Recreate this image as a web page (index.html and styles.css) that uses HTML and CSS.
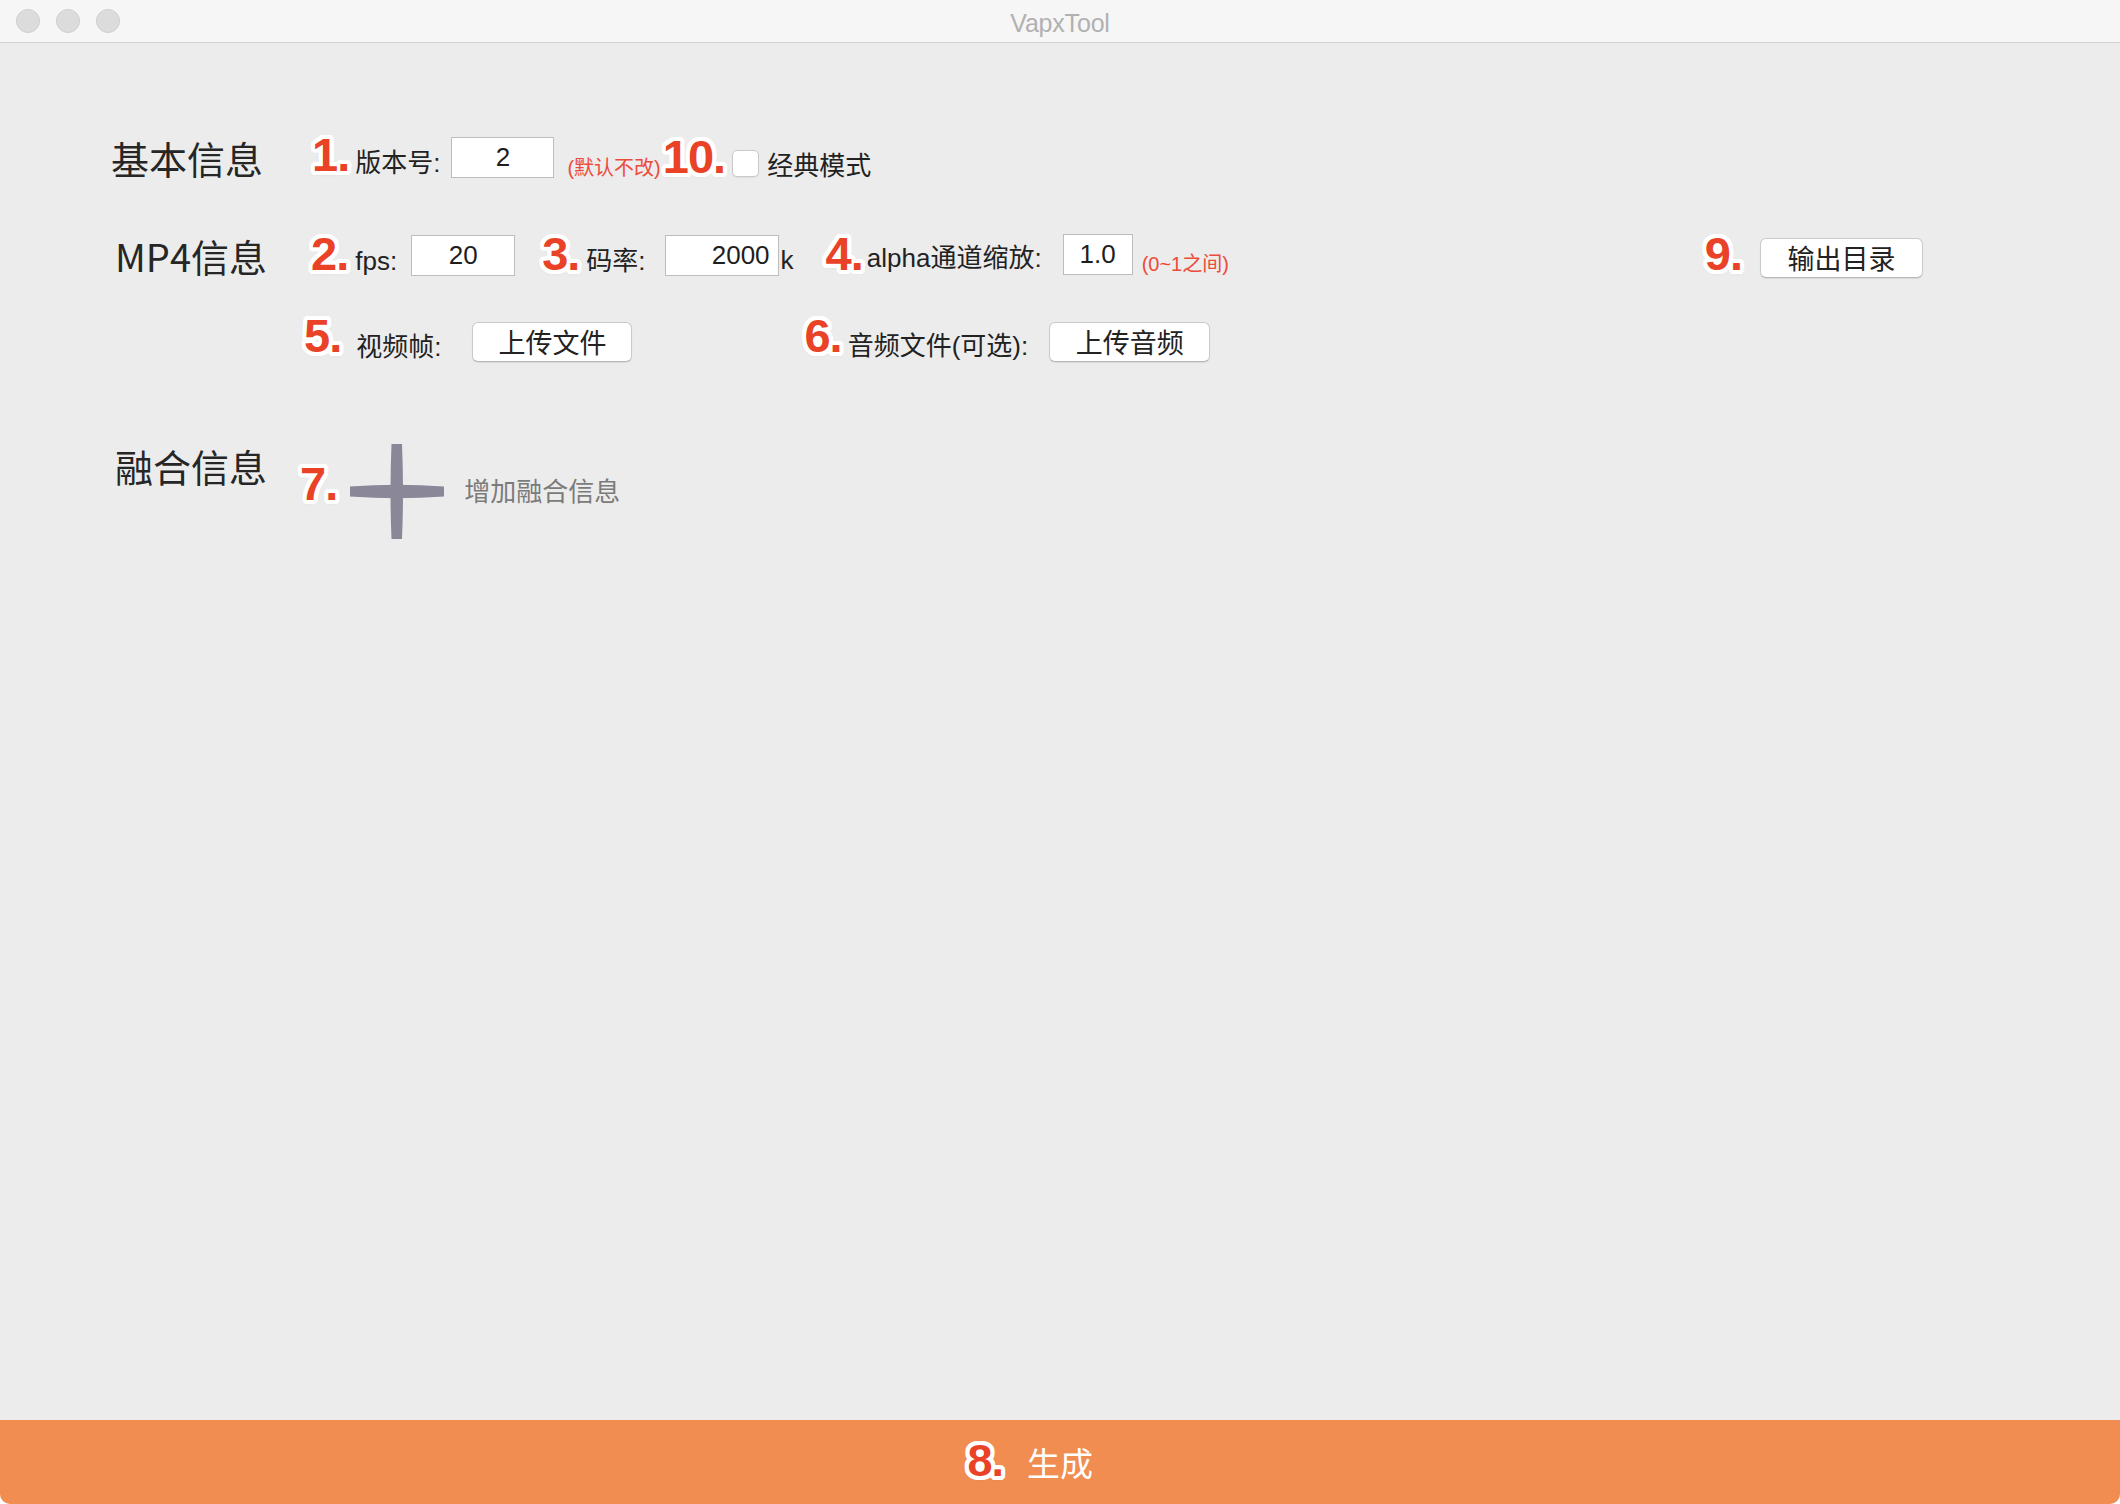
FILE: index.html
```html
<!DOCTYPE html>
<html lang="zh-CN">
<head>
<meta charset="utf-8">
<title>VapxTool</title>
<link rel="stylesheet" href="styles.css">
</head>
<body>
<div class="window">
  <header class="titlebar">
    <div class="lights">
      <span class="light"></span><span class="light"></span><span class="light"></span>
    </div>
    <div class="title">VapxTool</div>
    <div></div>
  </header>

  <main class="content">
    <section class="row row-basic">
      <h2 class="section">基本信息</h2>
      <span class="badge b1">1.</span>
      <span class="label l-version">版本号:</span>
      <div class="input in-version">2</div>
      <span class="note n-version">(默认不改)</span>
      <span class="badge b10">10.</span>
      <span class="checkbox"></span>
      <span class="label l-classic">经典模式</span>
    </section>

    <section class="row row-mp4">
      <h2 class="section">MP4信息</h2>
      <span class="badge b2">2.</span>
      <span class="label l-fps">fps:</span>
      <div class="input in-fps">20</div>
      <span class="badge b3">3.</span>
      <span class="label l-rate">码率:</span>
      <div class="input in-rate">2000</div>
      <span class="label l-k">k</span>
      <span class="badge b4">4.</span>
      <span class="label l-alpha">alpha通道缩放:</span>
      <div class="input in-alpha">1.0</div>
      <span class="note n-alpha">(0~1之间)</span>
      <span class="badge b9">9.</span>
      <button class="btn btn-out">输出目录</button>
    </section>

    <section class="row row-files">
      <span class="badge b5">5.</span>
      <span class="label l-frames">视频帧:</span>
      <button class="btn btn-frames">上传文件</button>
      <span class="badge b6">6.</span>
      <span class="label l-audio">音频文件(可选):</span>
      <button class="btn btn-audio">上传音频</button>
    </section>

    <section class="row row-merge">
      <h2 class="section section-merge">融合信息</h2>
      <span class="badge b7">7.</span>
      <svg class="plus" width="96" height="97" viewBox="0 0 96 97" aria-hidden="true">
        <path d="M1,43.5 Q48,40 95,43.5 L95,53.5 Q48,57 1,53.5 Z" fill="#8a8898"/>
        <path d="M42.5,1 Q40.5,48.5 42.5,96 L53,96 Q55,48.5 53,1 Z" fill="#8a8898"/>
      </svg>
      <span class="add-text">增加融合信息</span>
    </section>
  </main>

  <footer class="generate">
    <div class="gen-inner">
      <span class="badge b8">8.</span>
      <span class="gen-text">生成</span>
    </div>
  </footer>
</div>
</body>
</html>
```

FILE: styles.css
```css
* { box-sizing: border-box; }

html, body {
  margin: 0;
  padding: 0;
  background: #ffffff;
}

body {
  font-family: "Liberation Sans", "Noto Sans CJK SC", sans-serif;
  color: #222;
}

.window {
  width: 2120px;
  height: 1504px;
  display: flex;
  flex-direction: column;
  background: #ececec;
  border-radius: 0 0 10px 10px;
  overflow: hidden;
}

/* ---------- title bar ---------- */
.titlebar {
  height: 43px;
  flex: none;
  display: grid;
  grid-template-columns: 1fr auto 1fr;
  align-items: center;
  background: #f6f6f6;
  border-bottom: 1px solid #d3d3d3;
}

.lights {
  display: flex;
  gap: 16px;
  padding-left: 16px;
}

.light {
  width: 24px;
  height: 24px;
  border-radius: 50%;
  background: #dcdcdc;
  border: 1px solid #cfcfcf;
}

.title {
  font-family: "Liberation Sans", sans-serif;
  font-size: 25px;
  color: #b1b1b1;
  letter-spacing: -0.2px;
  padding-top: 4px;
}

/* ---------- content ---------- */
.content {
  flex: 1;
  display: flex;
  flex-direction: column;
}

.row {
  display: flex;
  align-items: center;
}

.row-basic {
  margin-top: 94px;
  height: 41px;
  padding-left: 111px;
}

.row-mp4 {
  margin-top: 57px;
  height: 41px;
  padding-left: 115px;
  padding-right: 197px;
}

.row-files {
  margin-top: 46px;
  height: 40px;
  padding-left: 304px;
}

.row-merge {
  margin-top: 81px;
  height: 97px;
  padding-left: 115px;
}

.section {
  margin: 0;
  font-family: "Noto Sans CJK SC", sans-serif;
  font-size: 38px;
  font-weight: 400;
  line-height: 50px;
  color: #262626;
  white-space: nowrap;
}

.section-merge {
  align-self: flex-start;
  margin-top: -2px;
}

.label {
  font-size: 26px;
  line-height: 34px;
  color: #222;
  white-space: nowrap;
}

.note {
  font-size: 20px;
  color: #ec4b3b;
  white-space: nowrap;
  margin-top: 18px;
}

.input {
  height: 41px;
  background: #fff;
  border: 1px solid #bdbdbd;
  font-size: 26px;
  line-height: 39px;
  text-align: center;
  color: #1e1e1e;
}

.checkbox {
  width: 27px;
  height: 27px;
  background: #fff;
  border: 1px solid #c9c9c9;
  border-radius: 5px;
  box-shadow: 0 1px 1px rgba(0,0,0,0.06);
  margin-top: 12px;
}

.btn {
  font-family: "Noto Sans CJK SC", sans-serif;
  font-size: 27px;
  color: #222;
  background: #fff;
  border: 1px solid #cacaca;
  border-bottom-color: #b7b7b7;
  border-radius: 6px;
  box-shadow: 0 1px 1px rgba(0,0,0,0.08);
  padding: 0;
  height: 40px;
  line-height: 36px;
}

/* ---------- annotation badges ---------- */
.badge {
  font-family: "Liberation Sans", sans-serif;
  font-weight: 700;
  font-size: 47px;
  line-height: 1;
  letter-spacing: -1px;
  color: #ea4226;
  white-space: nowrap;
  text-shadow:
    4px 0 0 #fff, -4px 0 0 #fff, 0 4px 0 #fff, 0 -4px 0 #fff,
    3px 3px 0 #fff, -3px 3px 0 #fff, 3px -3px 0 #fff, -3px -3px 0 #fff,
    4px 2px 0 #fff, -4px 2px 0 #fff, 4px -2px 0 #fff, -4px -2px 0 #fff,
    2px 4px 0 #fff, -2px 4px 0 #fff, 2px -4px 0 #fff, -2px -4px 0 #fff,
    0 1px 5px rgba(0,0,0,0.35);
  padding: 0 4px;
}

/* ---------- row 1 spacing ---------- */
.b1 { margin-left: 45px; margin-bottom: 6px; }
.l-version { margin-left: 2px; margin-top: 10px; }
.in-version { margin-left: 11px; width: 103px; }
.n-version { margin-left: 13px; }
.b10 { margin-left: -2px; margin-bottom: 2px; }
.checkbox { margin-left: 3px; }
.l-classic { margin-left: 8px; margin-top: 16px; }

/* ---------- row 2 spacing ---------- */
.b2 { margin-left: 40px; margin-bottom: 4px; }
.l-fps { margin-left: 3px; margin-top: 10px; }
.in-fps { margin-left: 14px; width: 104px; }
.b3 { margin-left: 23px; margin-bottom: 4px; }
.l-rate { margin-left: 3px; margin-top: 10px; }
.in-rate {
  margin-left: 19px;
  width: 114px;
  text-align: right;
  padding-right: 8px;
}
.l-k { margin-left: 2px; margin-top: 8px; }
.b4 { margin-left: 28px; margin-bottom: 4px; }
.l-alpha { margin-left: 0; margin-top: 4px; }
.in-alpha { margin-left: 21px; width: 70px; margin-bottom: 2px; }
.n-alpha { margin-left: 9px; margin-top: 14px; }
.b9 { margin-left: auto; margin-bottom: 4px; }
.btn-out { margin-left: 14px; width: 163px; margin-top: 4px; }

/* ---------- row 3 spacing ---------- */
.b5 { margin-left: -4px; margin-bottom: 14px; }
.l-frames { margin-left: 11px; margin-top: 10px; }
.btn-frames { margin-left: 31px; width: 160px; }
.b6 { margin-left: 168px; margin-bottom: 14px; }
.l-audio { margin-left: 2px; margin-top: 8px; }
.btn-audio { margin-left: 21px; width: 161px; }

/* ---------- row 4 ---------- */
.b7 { margin-left: 29px; margin-bottom: 16px; }
.plus { margin-left: 8px; flex: none; }
.add-text {
  margin-left: 19px;
  font-family: "Noto Sans CJK SC", sans-serif;
  font-size: 26px;
  color: #7b7b7b;
  margin-top: -4px;
}

/* ---------- footer ---------- */
.generate {
  height: 84px;
  flex: none;
  background: #f28d51;
  display: flex;
  justify-content: center;
  align-items: center;
}

.gen-inner {
  position: relative;
  display: flex;
  align-items: center;
}

.gen-text {
  font-family: "Noto Sans CJK SC", sans-serif;
  font-size: 33px;
  color: #fff;
  line-height: 40px;
}

.b8 {
  position: absolute;
  right: 100%;
  top: -4px;
  margin-right: 20px;
  font-size: 45px;
}
```
